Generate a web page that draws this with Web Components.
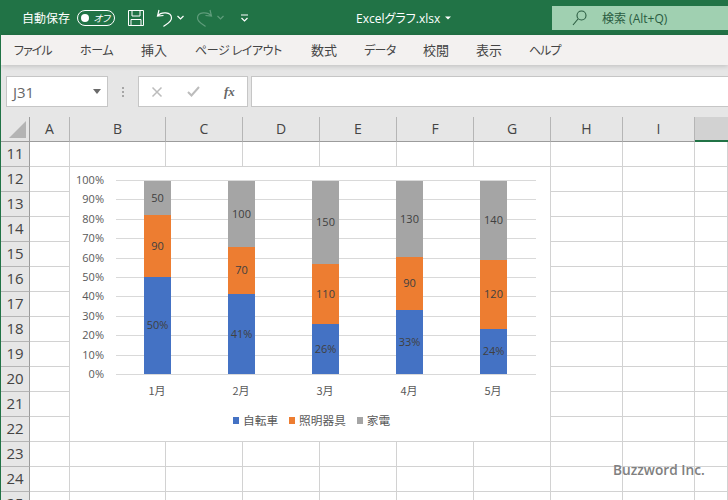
<!DOCTYPE html>
<html lang="ja">
<head>
<meta charset="utf-8">
<title>Excelグラフ.xlsx</title>
<style>
  html, body { height: 500px; overflow: hidden; }
  body {
    margin: 0;
    width: 727px;
    border-left: 1px solid #217346;
    position: relative;
    background: #fff;
    font-family: "Open Sans", "Noto Sans CJK JP", sans-serif;
  }
</style>
</head>
<body>
<xl-titlebar></xl-titlebar>
<xl-menu></xl-menu>
<xl-formula></xl-formula>
<xl-sheet>
  <xl-chart>
    <xl-bar label="1月" gray="34:50" orange="62:90" blue="97:50%"></xl-bar>
    <xl-bar label="2月" gray="66:100" orange="47:70" blue="80:41%"></xl-bar>
    <xl-bar label="3月" gray="83:150" orange="60:110" blue="50:26%"></xl-bar>
    <xl-bar label="4月" gray="76:130" orange="53:90" blue="64:33%"></xl-bar>
    <xl-bar label="5月" gray="79:140" orange="69:120" blue="45:24%"></xl-bar>
  </xl-chart>
</xl-sheet>
<xl-watermark>Buzzword Inc.</xl-watermark>

<script>
  class xlTitlebar extends HTMLElement {
    constructor() {
      super();
      this.attachShadow({ mode: "open" });
    }
    getStyles() {
      return `
        <style>
        :host { display: flex; align-items: center; height: 35px; background: #217346; color: #fff; font-size: 12px; font-family: "Open Sans", "Noto Sans CJK JP", sans-serif; }
        svg { display: block; flex: none; }
        .autosave { margin-left: 21px; width: 48px; white-space: nowrap; }
        .toggle { margin-left: 7px; width: 38px; height: 16px; box-sizing: border-box; border: 1px solid #fff; border-radius: 8px; display: flex; align-items: center; padding: 0 3px; justify-content: space-between; }
        .knob { width: 8px; height: 8px; border-radius: 50%; background: #fff; }
        .off { font-size: 9.500px; font-style: italic; margin-right: 1px; font-feature-settings: "palt"; }
        .save { margin-left: 13px; }
        .undo { margin-left: 12px; }
        .chev { margin-left: 4px; }
        .redo { margin-left: 12px; }
        .qat { margin-left: 16px; }
        .title { margin-left: 107px; font-size: 12px; width: 83px; white-space: nowrap; font-feature-settings: "palt"; }
        .caret { margin-left: 6px; }
        .search { margin-left: auto; margin-top: 1px; width: 176px; height: 24px; background: #a0d0b1; color: #2a5c41; display: flex; align-items: center; }
        .search svg { margin-left: 20px; }
        .search span { margin-left: 15px; white-space: nowrap; }
        </style>
      `;
    }
    connectedCallback() {
      this.shadowRoot.innerHTML = `
        <span class="autosave">自動保存</span>
        <span class="toggle"><span class="knob"></span><span class="off">オフ</span></span>
        <svg class="save" width="16" height="16" viewBox="0 0 16 16" fill="none" stroke="#fff"><path d="M.5.5h15v15H.5zM4 .5v5.5h8V.5M3 15.500V9.500h10v6"/></svg>
        <svg class="undo" width="17" height="18" viewBox="0 0 17 18" fill="none" stroke="#fff" stroke-width="1.2"><path d="M3 1L1.500 7 7.500 6.500M1.500 7C5 2.500 15.500 2.500 15.500 9 15.500 13 11 15 7.500 17.500"/></svg>
        <svg class="chev" width="7" height="5" viewBox="0 0 7 5" fill="none" stroke="#fff" stroke-width="1.2"><path d="M.5 1L3.500 4 6.500 1"/></svg>
        <svg class="redo" width="17" height="18" viewBox="0 0 17 18" fill="none" stroke="#5f9c7b" stroke-width="1.2"><path d="M14 1L15.500 7 9.500 6.500M15.500 7C12 2.500 1.500 2.500 1.500 9 1.500 13 6 15 9.500 17.500"/></svg>
        <svg class="chev" width="7" height="5" viewBox="0 0 7 5" fill="none" stroke="#5f9c7b" stroke-width="1.2"><path d="M.5 1L3.500 4 6.500 1"/></svg>
        <svg class="qat" width="9" height="8" viewBox="0 0 9 8" fill="none" stroke="#fff" stroke-width="1.2"><path d="M1 1H8M1.500 4L4.500 7 7.500 4"/></svg>
        <span class="title">Excelグラフ.xlsx</span>
        <svg class="caret" width="6" height="4" viewBox="0 0 6 4" fill="#fff"><path d="M0 .5H6L3 3.500z"/></svg>
        <div class="search">
          <svg width="15" height="16" viewBox="0 0 15 16" fill="none" stroke="#2a5c41" stroke-width="1.1"><circle cx="9.500" cy="5.500" r="4.500"/><path d="M6 9L1 15"/></svg>
          <span>検索 (Alt+Q)</span>
        </div>
        ${this.getStyles()}
      `;
    }
  }
  customElements.define("xl-titlebar", xlTitlebar);

  class xlMenu extends HTMLElement {
    constructor() {
      super();
      this.attachShadow({ mode: "open" });
    }
    connectedCallback() {
      // text, box width, font size, letter spacing
      const tabs = [
        ["ファイル", 66, 12, -1],
        ["ホーム", 61, 12, -0.3],
        ["挿入", 54, 13, 0],
        ["ページ レイアウト", 116, 12, -0.4],
        ["数式", 53, 13, 0],
        ["データ", 59, 12, -0.6],
        ["校閲", 53, 13, 0],
        ["表示", 53, 13, 0],
        ["ヘルプ", 53, 12, -1],
      ];
      this.shadowRoot.innerHTML = `
        <style>
        :host { display: flex; align-items: center; height: 30px; padding: 0 0 2px 13px; box-sizing: border-box; background: #f3f1f0; color: #444; font-family: "Noto Sans CJK JP", sans-serif; font-feature-settings: "palt"; position: relative; box-shadow: 0 1px 5px rgba(0,0,0,.18); }
        span { white-space: nowrap; flex: none; }
        </style>
        ${tabs.map(([t, w, f, s]) => `<span style="width:${w}px;font-size:${f}px;letter-spacing:${s}px">${t}</span>`).join("")}
      `;
    }
  }
  customElements.define("xl-menu", xlMenu);

  class xlFormula extends HTMLElement {
    constructor() {
      super();
      this.attachShadow({ mode: "open" });
    }
    connectedCallback() {
      this.shadowRoot.innerHTML = `
        <style>
        :host { display: flex; align-items: center; height: 52px; padding: 0 0 0 5px; box-sizing: border-box; background: #e6e6e6; color: #444; }
        .box { box-sizing: border-box; height: 31px; margin-top: 1px; background: #fff; border: 1px solid #c6c6c6; display: flex; align-items: center; }
        .name { width: 102px; padding: 0 6px 0 6px; justify-content: space-between; font: 15px "Open Sans", sans-serif; color: #666; }
        .dots { width: 2px; height: 10px; margin: 1px 14px 0 14px; background: repeating-linear-gradient(#a6a6a6 0 2px, transparent 2px 4px); }
        .btns { width: 110px; padding-left: 12px; gap: 24px; }
        .input { flex: 1; margin-left: 3px; border-right: 0; }
        .fx { font: italic bold 13px "Liberation Serif", serif; color: #666; }
        svg { display: block; flex: none; }
        </style>
        <div class="box name"><span>J31</span>
          <svg width="8" height="5" viewBox="0 0 8 5" fill="#6a6a6a"><path d="M0 0H8L4 5z"/></svg>
        </div>
        <div class="dots"></div>
        <div class="box btns">
          <svg width="12" height="12" viewBox="0 0 12 12" fill="none" stroke="#bcbcbc" stroke-width="1.500"><path d="M1.500 1.500L10.500 10.500M10.500 1.500L1.500 10.500"/></svg>
          <svg width="13" height="11" viewBox="0 0 13 11" fill="none" stroke="#bcbcbc" stroke-width="2"><path d="M1 6L4.500 9.500 12 1"/></svg>
          <span class="fx">fx</span>
        </div>
        <div class="box input"></div>
      `;
    }
  }
  customElements.define("xl-formula", xlFormula);

  class xlSheet extends HTMLElement {
    constructor() {
      super();
      this.attachShadow({ mode: "open" });
    }
    getStyles() {
      return `
        <style>
        :host { display: block; position: relative; height: 383px; overflow: hidden; font-family: "Open Sans", sans-serif; color: #444; }
        .grid { display: grid; grid-template-columns: 29px 40px 96px repeat(5, 77px) 72px 72px 1fr; grid-auto-rows: 25px; }
        .h { box-sizing: border-box; background: #e6e6e6; display: flex; align-items: center; justify-content: center; padding-bottom: 2px; font-size: 14px; border-right: 1px solid #b5b5b5; border-bottom: 1px solid #9c9c9c; }
        .r { font-size: 15px; border-right: 1px solid #9c9c9c; border-bottom: 1px solid #b5b5b5; }
        .corner { align-items: flex-end; justify-content: flex-end; padding: 0 3px 3px 0; border-right: 1px solid #9c9c9c; }
        .sel { background: #d2d2d2; border-right: 0; border-bottom: 2px solid #217346; }
        .c { box-sizing: border-box; border-right: 1px solid #d2d2d2; border-bottom: 1px solid #d2d2d2; }
        </style>
      `;
    }
    connectedCallback() {
      const cols = ["A", "B", "C", "D", "E", "F", "G", "H", "I"];
      let html = `<div class="h corner"><svg width="17" height="17" viewBox="0 0 17 17" fill="#b4b4b4"><path d="M17 0V17H0z"/></svg></div>`;
      html += cols.map((c) => `<div class="h">${c}</div>`).join("");
      html += `<div class="h sel"></div>`;
      for (let row = 11; row <= 25; row++) {
        html += `<div class="h r">${row}</div>`;
        html += `<div class="c"></div>`.repeat(10);
      }
      this.shadowRoot.innerHTML = `<div class="grid">${html}</div><slot></slot>${this.getStyles()}`;
    }
  }
  customElements.define("xl-sheet", xlSheet);

  class xlBar extends HTMLElement {
    constructor() {
      super();
      this.attachShadow({ mode: "open" });
    }
    segment(name, color) {
      const [h, text] = this.getAttribute(name).split(":");
      return `<div style="height:${h}px;background:${color}">${text}</div>`;
    }
    connectedCallback() {
      this.shadowRoot.innerHTML = `
        <style>
        :host { display: block; width: 27px; margin-left: 28px; margin-right: 29px; }
        div { display: flex; align-items: center; justify-content: center; box-sizing: border-box; padding-bottom: 2px; font-size: 11px; color: #404040; white-space: nowrap; }
        </style>
        ${this.segment("gray", "#a5a5a5")}
        ${this.segment("orange", "#ed7d31")}
        ${this.segment("blue", "#4472c4")}
      `;
    }
  }
  customElements.define("xl-bar", xlBar);

  class xlChart extends HTMLElement {
    constructor() {
      super();
      this.attachShadow({ mode: "open" });
    }
    getStyles() {
      return `
        <style>
        /* the chart floats over the cells */
        :host { position: absolute; left: 69px; top: 50px; width: 480px; height: 274px; background: #fff; color: #595959; font: 11px "Open Sans", "Noto Sans CJK JP", sans-serif; display: flex; flex-direction: column; }
        .main { display: flex; margin-top: 13px; }
        .yaxis { width: 34px; height: 195px; margin-top: -1px; display: flex; flex-direction: column; justify-content: space-between; }
        .yaxis span { height: 1px; display: flex; align-items: center; justify-content: flex-end; }
        .plot { margin-left: 12px; width: 420px; height: 195px; display: grid; }
        .lines, .bars { grid-area: 1 / 1; }
        .lines { display: flex; flex-direction: column; justify-content: space-between; }
        .lines i { display: block; height: 1px; background: #d9d9d9; }
        .bars { display: flex; align-items: flex-start; padding-top: 1px; }
        .cats { display: flex; margin: 7px 0 0 46px; font-family: "Noto Sans CJK JP", sans-serif; line-height: 16px; }
        .cats span { width: 84px; text-align: center; padding-right: 2px; box-sizing: border-box; }
        .legend { display: flex; align-items: center; margin: 14px 0 0 163px; font-family: "Noto Sans CJK JP", sans-serif; font-size: 11.700px; line-height: 16px; }
        .legend i { width: 6px; height: 7px; margin-right: 4px; }
        .legend span { margin-right: 11px; white-space: nowrap; }
        </style>
      `;
    }
    connectedCallback() {
      const ticks = [100, 90, 80, 70, 60, 50, 40, 30, 20, 10, 0];
      const cats = [...this.querySelectorAll("xl-bar")].map((b) => b.getAttribute("label"));
      this.shadowRoot.innerHTML = `
        <div class="main">
          <div class="yaxis">${ticks.map((t) => `<span>${t}%</span>`).join("")}</div>
          <div class="plot">
            <div class="lines">${"<i></i>".repeat(11)}</div>
            <div class="bars"><slot></slot></div>
          </div>
        </div>
        <div class="cats">${cats.map((c) => `<span>${c}</span>`).join("")}</div>
        <div class="legend">
          <i style="background:#4472c4"></i><span>自転車</span>
          <i style="background:#ed7d31"></i><span>照明器具</span>
          <i style="background:#a5a5a5"></i><span>家電</span>
        </div>
        ${this.getStyles()}
      `;
    }
  }
  customElements.define("xl-chart", xlChart);

  class xlWatermark extends HTMLElement {
    constructor() {
      super();
      this.attachShadow({ mode: "open" });
      this.shadowRoot.innerHTML = `
        <style>
        /* watermark lies over the sheet */
        :host { position: absolute; left: 612px; top: 460px; color: #808080; font: 600 13.700px/20px "Open Sans", sans-serif; white-space: nowrap; }
        </style>
        <slot></slot>
      `;
    }
  }
  customElements.define("xl-watermark", xlWatermark);
</script>
</body>
</html>
